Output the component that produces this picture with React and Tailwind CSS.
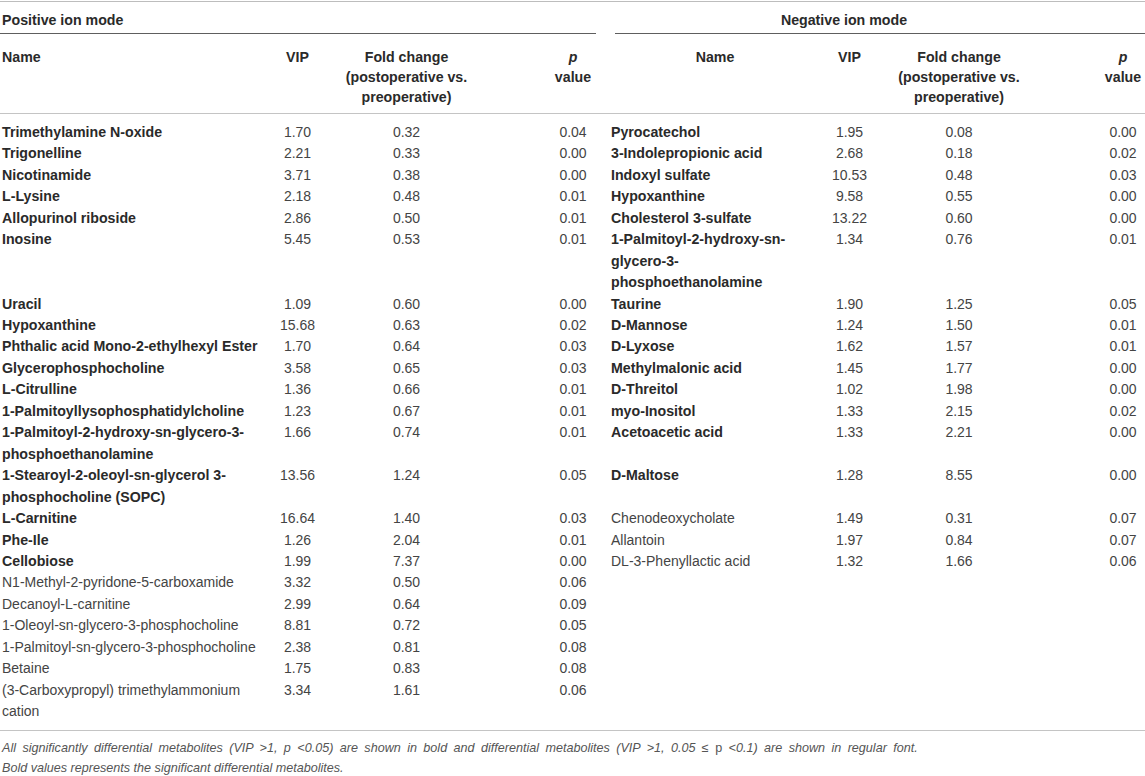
import React from "react";

const GRID =
  "grid grid-cols-[262px_71px_147px_116px_15px_208px_61px_158px_107px]";

const rows = [
  [["Trimethylamine N-oxide", "1.70", "0.32", "0.04", true], ["Pyrocatechol", "1.95", "0.08", "0.00", true]],
  [["Trigonelline", "2.21", "0.33", "0.00", true], ["3-Indolepropionic acid", "2.68", "0.18", "0.02", true]],
  [["Nicotinamide", "3.71", "0.38", "0.00", true], ["Indoxyl sulfate", "10.53", "0.48", "0.03", true]],
  [["L-Lysine", "2.18", "0.48", "0.01", true], ["Hypoxanthine", "9.58", "0.55", "0.00", true]],
  [["Allopurinol riboside", "2.86", "0.50", "0.01", true], ["Cholesterol 3-sulfate", "13.22", "0.60", "0.00", true]],
  [["Inosine", "5.45", "0.53", "0.01", true], [["1-Palmitoyl-2-hydroxy-sn-", "glycero-3-", "phosphoethanolamine"], "1.34", "0.76", "0.01", true]],
  [["Uracil", "1.09", "0.60", "0.00", true], ["Taurine", "1.90", "1.25", "0.05", true]],
  [["Hypoxanthine", "15.68", "0.63", "0.02", true], ["D-Mannose", "1.24", "1.50", "0.01", true]],
  [["Phthalic acid Mono-2-ethylhexyl Ester", "1.70", "0.64", "0.03", true], ["D-Lyxose", "1.62", "1.57", "0.01", true]],
  [["Glycerophosphocholine", "3.58", "0.65", "0.03", true], ["Methylmalonic acid", "1.45", "1.77", "0.00", true]],
  [["L-Citrulline", "1.36", "0.66", "0.01", true], ["D-Threitol", "1.02", "1.98", "0.00", true]],
  [["1-Palmitoyllysophosphatidylcholine", "1.23", "0.67", "0.01", true], ["myo-Inositol", "1.33", "2.15", "0.02", true]],
  [[["1-Palmitoyl-2-hydroxy-sn-glycero-3-", "phosphoethanolamine"], "1.66", "0.74", "0.01", true], ["Acetoacetic acid", "1.33", "2.21", "0.00", true]],
  [[["1-Stearoyl-2-oleoyl-sn-glycerol 3-", "phosphocholine (SOPC)"], "13.56", "1.24", "0.05", true], ["D-Maltose", "1.28", "8.55", "0.00", true]],
  [["L-Carnitine", "16.64", "1.40", "0.03", true], ["Chenodeoxycholate", "1.49", "0.31", "0.07", false]],
  [["Phe-Ile", "1.26", "2.04", "0.01", true], ["Allantoin", "1.97", "0.84", "0.07", false]],
  [["Cellobiose", "1.99", "7.37", "0.00", true], ["DL-3-Phenyllactic acid", "1.32", "1.66", "0.06", false]],
  [["N1-Methyl-2-pyridone-5-carboxamide", "3.32", "0.50", "0.06", false], null],
  [["Decanoyl-L-carnitine", "2.99", "0.64", "0.09", false], null],
  [["1-Oleoyl-sn-glycero-3-phosphocholine", "8.81", "0.72", "0.05", false], null],
  [["1-Palmitoyl-sn-glycero-3-phosphocholine", "2.38", "0.81", "0.08", false], null],
  [["Betaine", "1.75", "0.83", "0.08", false], null],
  [[["(3-Carboxypropyl) trimethylammonium", "cation"], "3.34", "1.61", "0.06", false], null],
];

function Name({ name, bold, className }) {
  const parts = Array.isArray(name) ? name : [name];
  return (
    <div
      className={`${className} ${
        bold ? "font-bold text-[14.2px] text-[#2a2a2a]" : "text-[#444]"
      }`}
    >
      {parts.map((p, i) => (
        <React.Fragment key={i}>
          {i > 0 && <br />}
          {p}
        </React.Fragment>
      ))}
    </div>
  );
}

function Cells({ d, side }) {
  if (!d) {
    return (
      <>
        <div />
        <div />
        <div />
        <div />
      </>
    );
  }
  const [name, vip, fold, p, bold] = d;
  return (
    <>
      <Name name={name} bold={bold} className={side === "L" ? "pl-[2px]" : ""} />
      <div className="text-center text-[#444]">{vip}</div>
      <div className="text-center text-[#444]">{fold}</div>
      <div className={`text-center text-[#444] ${side === "L" ? "pl-[70px]" : "pl-[63px]"}`}>{p}</div>
    </>
  );
}

export default function App() {
  return (
    <div
      className="w-[1145px] h-[776px] bg-white text-[14px] overflow-hidden"
      style={{ fontFamily: '"Liberation Sans", Arial, sans-serif' }}
    >
      <div className="pt-[1px]">
        <div className="h-[1px] bg-[#bdbdbd]" />
      </div>

      {/* Section headers */}
      <div className={`${GRID} font-bold text-[14.2px] text-[#2a2a2a] leading-[21.4px]`}>
        <div className="col-span-4 border-b border-[#5e5e5e] pt-[8px] pb-[2px] pl-[2px]">
          Positive ion mode
        </div>
        <div />
        <div className="col-span-4 ml-[4px] border-b border-[#5e5e5e] pt-[8px] pb-[2px] pr-[72px] text-center">
          Negative ion mode
        </div>
      </div>

      {/* Column headers */}
      <div
        className={`${GRID} font-bold text-[14.2px] text-[#2a2a2a] leading-[20px] border-b border-[#c4c4c4] pt-[12.5px] pb-[6px]`}
      >
        <div className="pl-[2px]">Name</div>
        <div className="text-center">VIP</div>
        <div className="text-center">
          Fold change
          <br />
          (postoperative vs.
          <br />
          preoperative)
        </div>
        <div className="text-center pl-[70px]">
          <i>p</i>
          <br />
          value
        </div>
        <div />
        <div className="text-center">Name</div>
        <div className="text-center">VIP</div>
        <div className="text-center">
          Fold change
          <br />
          (postoperative vs.
          <br />
          preoperative)
        </div>
        <div className="text-center pl-[63px]">
          <i>p</i>
          <br />
          value
        </div>
      </div>

      {/* Body */}
      <div className={`${GRID} leading-[21.45px] border-b border-[#c4c4c4] pt-[8px] pb-[7px]`}>
        {rows.map(([l, r], i) => (
          <React.Fragment key={i}>
            <Cells d={l} side="L" />
            <div />
            <Cells d={r} side="R" />
          </React.Fragment>
        ))}
      </div>

      {/* Footnotes */}
      <div className="pt-[8.5px] pl-[2px] italic text-[12.6px] leading-[19.4px] text-[#555]">
        <div className="whitespace-nowrap [word-spacing:2.9px]">
          All significantly differential metabolites (VIP &gt;1, p &lt;0.05) are shown in bold and
          differential metabolites (VIP &gt;1, 0.05 ≤ <span className="not-italic">p</span> &lt;0.1)
          are shown in regular font.
        </div>
        <div>Bold values represents the significant differential metabolites.</div>
      </div>
    </div>
  );
}
